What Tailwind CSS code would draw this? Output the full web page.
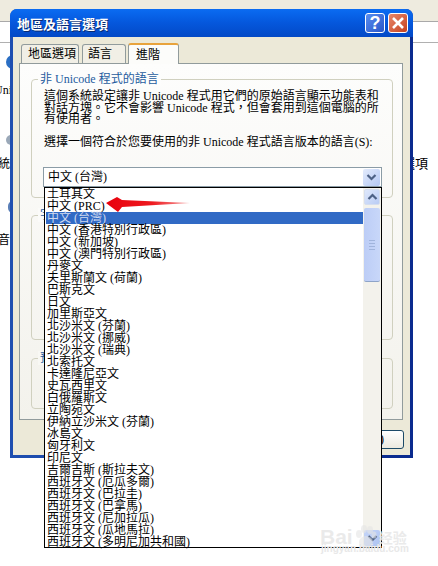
<!DOCTYPE html>
<html>
<head>
<meta charset="utf-8">
<script src="https://cdn.jsdelivr.net/npm/@tailwindcss/browser@4"></script>
</head>
<body class="bg-white">
<div class="relative w-[438px] h-[566px] overflow-hidden bg-white text-[12px] text-black font-['Liberation_Serif','Noto_Sans_CJK_TC',serif]">
  <!-- page behind the dialog -->
  <div class="h-[22px] bg-[#eeebdf] border-b border-[#a9a9a9]"></div>
  <div class="h-[21px] border-b border-[#b0b0b0]"></div>
  <div class="absolute left-[6px] top-[55px] w-[14px] h-[14px] rounded-full bg-[#2b6fc4]"></div>
  <div class="absolute left-[-6px] top-[84px] leading-[12px]">Unicode</div>
  <div class="absolute left-[6px] top-[135px] w-[10px] h-[10px] rounded-full bg-[#9aa8b8]"></div>
  <div class="absolute left-[-14px] top-[158px] leading-[12px]">系統<br>學</div>
  <div class="absolute left-[8px] top-[201px] w-[10px] h-[12px] rounded-full bg-[#5a7fb8]"></div>
  <div class="absolute left-[-2px] top-[234px] leading-[12px]">音</div>
  <div class="absolute left-[402px] top-[157px] text-[13px] leading-[13px]">選項</div>

  <!-- dialog window -->
  <div class="absolute left-[10px] top-[9px] w-[403px] h-[449px] flex flex-col rounded-t-[7px] bg-linear-to-r from-[#1f4fb0] to-[#0a2a8e] overflow-hidden">
    <div class="h-[28px] shrink-0 flex items-center pl-[7px] pr-[5px] bg-linear-to-b from-[#0b6cf2] via-[#0557dc] to-[#0349c6]">
      <span class="flex-1 text-white font-bold text-[13px] leading-[13px] font-['Noto_Sans_CJK_TC',sans-serif] [text-shadow:1px_1px_0_#0a2a70]">地區及語言選項</span>
      <div class="w-[20px] h-[20px] mr-[3px] flex items-center justify-center rounded-[3px] border border-white bg-linear-to-br from-[#5a8ef0] to-[#2a55c8] text-white font-bold text-[18px] leading-none font-['Liberation_Sans',sans-serif]">?</div>
      <div class="w-[20px] h-[20px] flex items-center justify-center rounded-[3px] border border-white bg-linear-to-br from-[#e8876a] to-[#c4401c]">
        <svg width="14" height="14" viewBox="0 0 14 14"><path d="M2 2 L12 12 M12 2 L2 12" stroke="#fff" stroke-width="2.6"/></svg>
      </div>
    </div>
    <div class="flex-1 ml-[3px] mr-[3px] mb-[3px] bg-[#ece9d8] pl-[6px] pt-[7px] flex flex-col">
      <!-- tabs -->
      <div class="h-[20px] flex items-end pl-[2px] relative z-10 text-[12px]">
        <div class="w-[58px] h-[19px] mb-[1px] pl-[6px] flex items-center border border-b-0 border-[#919b9c] rounded-t-[3px] bg-[#f1efe6]">地區選項</div>
        <div class="w-[44px] h-[19px] mb-[1px] ml-[3px] pl-[5px] flex items-center border border-b-0 border-[#919b9c] rounded-t-[3px] bg-[#f1efe6]">語言</div>
        <div class="w-[51px] h-[21px] ml-[2px] pl-[7px] flex items-center border-x border-[#919b9c] border-t-2 border-t-[#e8a33c] rounded-t-[3px] bg-[#fcfcfa]">進階</div>
      </div>
      <!-- panel -->
      <div class="w-[384px] h-[357px] -mt-px border border-[#919b9c] bg-linear-to-b from-[#fdfdfc] to-[#f3f2ec] pl-[11px] pt-[15px] flex flex-col">
        <div class="relative w-[362px] h-[119px] shrink-0 border border-[#d0d0bf] rounded-[4px] pl-[12px] pt-[11px]">
          <div class="absolute left-[6px] top-[-8px] px-[2px] bg-[#fdfdfc] leading-[14px] text-[#1f5c9e]">非 Unicode 程式的語言</div>
          <div class="leading-[11.5px]">這個系統設定讓非 Unicode 程式用它們的原始語言顯示功能表和<br>對話方塊。它不會影響 Unicode 程式，但會套用到這個電腦的所<br>有使用者。</div>
          <div class="mt-[10.5px] leading-[12px]">選擇一個符合於您要使用的非 Unicode 程式語言版本的語言(S):</div>
          <div class="mt-[19px] -ml-px w-[339px] h-[20px] border border-[#8b9ca6] bg-white flex items-center justify-between pl-[4px] pr-px text-[12px]">
            <span>中文 (台灣)</span>
            <div class="w-[17px] h-[17px] flex items-center justify-center rounded-[2px] bg-linear-to-br from-[#e3ebfc] to-[#b4c8f3]">
              <svg width="11" height="9" viewBox="0 0 11 9"><path d="M1.5 2 L5.5 6 L9.5 2" fill="none" stroke="#4d6185" stroke-width="2.2"/></svg>
            </div>
          </div>
        </div>
        <div class="relative w-[362px] h-[125px] shrink-0 mt-[17px] border border-[#d0d0bf] rounded-[4px]">
          <div class="absolute left-[6px] top-[-8px] px-[2px] bg-[#fbfbf9] leading-[14px] text-[#1f5c9e]">字碼頁轉換表</div>
        </div>
        <div class="relative w-[362px] h-[51px] shrink-0 mt-[18px] border border-[#d0d0bf] rounded-[4px]">
          <div class="absolute left-[6px] top-[-8px] px-[2px] bg-[#f8f8f4] leading-[14px] text-[#1f5c9e]">預設使用者帳戶設定</div>
        </div>
      </div>
      <div class="flex justify-end mt-[10px] pr-[6px]">
        <div class="w-[75px] h-[19px] border border-[#1c4a68] rounded-[3px] bg-linear-to-b from-white to-[#ece9df] text-right pr-[19px] leading-[17px]">取消(C)</div>
      </div>
    </div>
  </div>

  <!-- open dropdown list -->
  <div class="absolute left-[44px] top-[187px] w-[338px] h-[361px] border border-black border-t-black bg-white flex">
    <div class="flex-1 flex flex-col leading-[12px] text-[12px] pl-[1px]">
      <div class="h-[12px] pl-[1px] whitespace-nowrap">土耳其文</div>
      <div class="h-[12px] pl-[1px] whitespace-nowrap">中文 (PRC)</div>
      <div class="h-[12px] pl-[1px] whitespace-nowrap bg-[#316ac5] text-[#cfd9ee]">中文 (台灣)</div>
      <div class="h-[12px] pl-[1px] whitespace-nowrap">中文 (香港特別行政區)</div>
      <div class="h-[12px] pl-[1px] whitespace-nowrap">中文 (新加坡)</div>
      <div class="h-[12px] pl-[1px] whitespace-nowrap">中文 (澳門特別行政區)</div>
      <div class="h-[12px] pl-[1px] whitespace-nowrap">丹麥文</div>
      <div class="h-[12px] pl-[1px] whitespace-nowrap">夫里斯蘭文 (荷蘭)</div>
      <div class="h-[12px] pl-[1px] whitespace-nowrap">巴斯克文</div>
      <div class="h-[12px] pl-[1px] whitespace-nowrap">日文</div>
      <div class="h-[12px] pl-[1px] whitespace-nowrap">加里斯亞文</div>
      <div class="h-[12px] pl-[1px] whitespace-nowrap">北沙米文 (芬蘭)</div>
      <div class="h-[12px] pl-[1px] whitespace-nowrap">北沙米文 (挪威)</div>
      <div class="h-[12px] pl-[1px] whitespace-nowrap">北沙米文 (瑞典)</div>
      <div class="h-[12px] pl-[1px] whitespace-nowrap">北索托文</div>
      <div class="h-[12px] pl-[1px] whitespace-nowrap">卡達隆尼亞文</div>
      <div class="h-[12px] pl-[1px] whitespace-nowrap">史瓦西里文</div>
      <div class="h-[12px] pl-[1px] whitespace-nowrap">白俄羅斯文</div>
      <div class="h-[12px] pl-[1px] whitespace-nowrap">立陶宛文</div>
      <div class="h-[12px] pl-[1px] whitespace-nowrap">伊納立沙米文 (芬蘭)</div>
      <div class="h-[12px] pl-[1px] whitespace-nowrap">冰島文</div>
      <div class="h-[12px] pl-[1px] whitespace-nowrap">匈牙利文</div>
      <div class="h-[12px] pl-[1px] whitespace-nowrap">印尼文</div>
      <div class="h-[12px] pl-[1px] whitespace-nowrap">吉爾吉斯 (斯拉夫文)</div>
      <div class="h-[12px] pl-[1px] whitespace-nowrap">西班牙文 (厄瓜多爾)</div>
      <div class="h-[12px] pl-[1px] whitespace-nowrap">西班牙文 (巴拉圭)</div>
      <div class="h-[12px] pl-[1px] whitespace-nowrap">西班牙文 (巴拿馬)</div>
      <div class="h-[12px] pl-[1px] whitespace-nowrap">西班牙文 (尼加拉瓜)</div>
      <div class="h-[12px] pl-[1px] whitespace-nowrap">西班牙文 (瓜地馬拉)</div>
      <div class="h-[12px] pl-[1px] whitespace-nowrap">西班牙文 (多明尼加共和國)</div>
    </div>
    <!-- scrollbar -->
    <div class="w-[18px] shrink-0 bg-[#f3f2ec] flex flex-col items-center pt-px pb-px">
      <div class="w-[16px] h-[16px] flex items-center justify-center rounded-[2px] border border-[#d5deef] bg-linear-to-br from-[#dfe8fb] to-[#b9ccf4]">
        <svg width="11" height="8" viewBox="0 0 11 8"><path d="M1.5 6 L5.5 2 L9.5 6" fill="none" stroke="#4d6185" stroke-width="2.2"/></svg>
      </div>
      <div class="w-[16px] h-[74px] mt-[3px] flex flex-col items-center justify-center gap-[2px] rounded-[2px] border-b border-[#8ea4c8] bg-linear-to-r from-[#bccdf6] to-[#c8d7f9]">
        <div class="w-[6px] h-px bg-[#a0b4dc]"></div>
        <div class="w-[6px] h-px bg-[#a0b4dc]"></div>
        <div class="w-[6px] h-px bg-[#a0b4dc]"></div>
        <div class="w-[6px] h-px bg-[#a0b4dc]"></div>
      </div>
      <div class="flex-1"></div>
      <div class="w-[16px] h-[16px] flex items-center justify-center rounded-[2px] bg-linear-to-br from-[#c5d5f8] to-[#adc3f2]">
        <svg width="11" height="8" viewBox="0 0 11 8"><path d="M1.5 2 L5.5 6 L9.5 2" fill="none" stroke="#4d6185" stroke-width="2.2"/></svg>
      </div>
    </div>
  </div>

  <!-- red arrow annotation -->
  <svg class="absolute left-[104px] top-[194px]" width="90" height="20" viewBox="0 0 90 20">
    <defs><linearGradient id="fade" x1="0" x2="1" y1="0" y2="0"><stop offset="0" stop-color="#e8000c"/><stop offset="0.55" stop-color="#ee1a20"/><stop offset="1" stop-color="#f6a0a0"/></linearGradient></defs>
    <path d="M2 9 L13 3 L18 6 L86 9 L18 13 L14 18 Z" fill="url(#fade)"/>
  </svg>

  <!-- watermark -->
  <div class="absolute left-[320px] top-[524px] flex items-center text-[21px] leading-[22px] text-[#e8e8e8]/90 font-['Liberation_Sans',sans-serif] font-bold">
    <span>Bai</span>
    <svg width="24" height="26" viewBox="0 0 24 26"><g fill="#e4e4e4" fill-opacity="0.6"><ellipse cx="6" cy="10" rx="3" ry="4"/><ellipse cx="11" cy="5" rx="3" ry="4"/><ellipse cx="17" cy="6" rx="3" ry="4"/><ellipse cx="21" cy="11" rx="2.5" ry="3.5"/><ellipse cx="13" cy="18" rx="7" ry="6"/></g></svg>
    <span class="text-[14px] font-['Noto_Sans_CJK_SC',sans-serif] ml-[2px]">经验</span>
  </div>
  <div class="absolute left-[321px] top-[543px] text-[10px] leading-[12px] text-[#e8e8e8] font-bold font-['Liberation_Sans',sans-serif]">jingyan.baidu.com</div>
</div>
</body>
</html>
